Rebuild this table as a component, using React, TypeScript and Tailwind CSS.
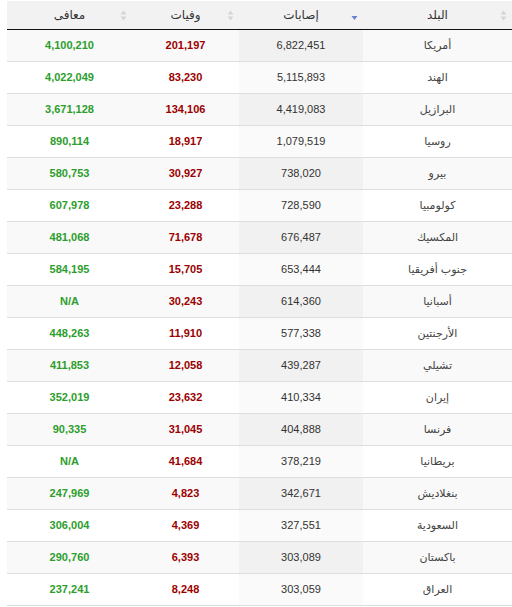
const rows: [string, string, string, string][] = [
  ["أمريكا", "6,822,451", "201,197", "4,100,210"],
  ["الهند", "5,115,893", "83,230", "4,022,049"],
  ["البرازيل", "4,419,083", "134,106", "3,671,128"],
  ["روسيا", "1,079,519", "18,917", "890,114"],
  ["بيرو", "738,020", "30,927", "580,753"],
  ["كولومبيا", "728,590", "23,288", "607,978"],
  ["المكسيك", "676,487", "71,678", "481,068"],
  ["جنوب أفريقيا", "653,444", "15,705", "584,195"],
  ["أسبانيا", "614,360", "30,243", "N/A"],
  ["الأرجنتين", "577,338", "11,910", "448,263"],
  ["تشيلي", "439,287", "12,058", "411,853"],
  ["إيران", "410,334", "23,632", "352,019"],
  ["فرنسا", "404,888", "31,045", "90,335"],
  ["بريطانيا", "378,219", "41,684", "N/A"],
  ["بنغلاديش", "342,671", "4,823", "247,969"],
  ["السعودية", "327,551", "4,369", "306,004"],
  ["باكستان", "303,089", "6,393", "290,760"],
  ["العراق", "303,059", "8,248", "237,241"],
];

function SortBoth() {
  return (
    <svg width="7" height="11" viewBox="0 0 7 11" className="absolute right-[5px] top-[9px]">
      <path d="M3.5 0.5 L6.5 4.5 L0.5 4.5 Z" fill="#d6d6d6" />
      <path d="M3.5 10.5 L6.5 6.5 L0.5 6.5 Z" fill="#d6d6d6" />
    </svg>
  );
}

function SortDesc() {
  return (
    <svg width="7" height="11" viewBox="0 0 7 11" className="absolute right-[5px] top-[9px]">
      <path d="M3.5 10 L6.5 6 L0.5 6 Z" fill="#6f7fd0" />
    </svg>
  );
}

const font = { fontFamily: '"Liberation Sans", "DejaVu Sans", Arial, sans-serif' };

export default function App() {
  return (
    <div className="bg-white pl-[7px] pt-[1px]" style={font}>
      <table dir="rtl" className="w-[505px] table-fixed border-collapse text-[11px]">
        <colgroup>
          <col className="w-[149px]" />
          <col className="w-[124px]" />
          <col className="w-[107px]" />
          <col className="w-[125px]" />
        </colgroup>
        <thead>
          <tr className="h-[28px] bg-[#f2f2f2] text-[12px] font-normal text-[#333]">
            <th className="relative border-b border-[#111] font-normal">
              البلد
              <SortBoth />
            </th>
            <th className="relative border-b border-[#111] font-normal">
              إصابات
              <SortDesc />
            </th>
            <th className="relative border-b border-[#111] font-normal">
              وفيات
              <SortBoth />
            </th>
            <th className="relative border-b border-[#111] font-normal">
              معافى
              <SortBoth />
            </th>
          </tr>
        </thead>
        <tbody>
          {rows.map((r, i) => {
            const odd = i % 2 === 0;
            return (
              <tr key={r[0]} className={`h-[32px] border-b border-[#dedede] ${odd ? "bg-[#f9f9f9]" : "bg-white"}`}>
                <td className="text-center text-[#444]">{r[0]}</td>
                <td className={`text-center text-[#333] ${odd ? "bg-[#f1f1f1]" : "bg-[#fafafa]"}`}>{r[1]}</td>
                <td className="text-center font-bold text-[#9b0000]">{r[2]}</td>
                <td className="text-center font-bold text-[#2c9e2c]">{r[3]}</td>
              </tr>
            );
          })}
        </tbody>
      </table>
    </div>
  );
}
